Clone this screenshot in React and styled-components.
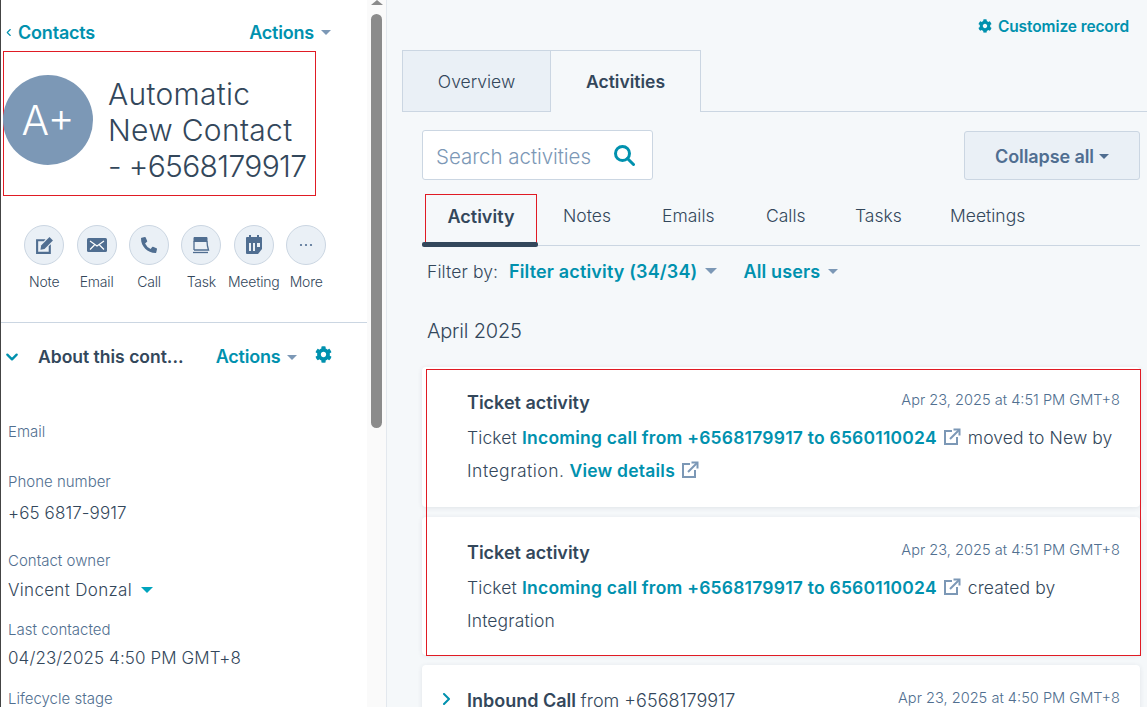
import styled, { createGlobalStyle } from "styled-components";
import { FaCog, FaPhoneAlt } from "react-icons/fa";

const GlobalStyle = createGlobalStyle`
  html, body {
    margin: 0;
    height: 100%;
    overflow: hidden;
    background: #f5f8fa;
  }
  * {
    box-sizing: border-box;
  }
  body {
    font-family: Inter, "Noto Sans", sans-serif;
    color: #33475b;
  }
`;

const Page = styled.div`
  width: 1147px;
  height: 707px;
  display: flex;
  overflow: hidden;
`;

/* left column */
const Sidebar = styled.aside`
  width: 367px;
  height: 707px;
  flex: none;
  background: #fff;
  border-left: 1px solid #444;
  overflow: hidden;
`;
const TopRow = styled.div`
  height: 51px;
  padding: 13px 36px 0 4px;
  display: flex;
  justify-content: space-between;
  align-items: center;
`;
const BackLink = styled.a`
  display: flex;
  align-items: center;
  gap: 4px;
  color: #0091ae;
  font-size: 18px;
  font-weight: 600;
  letter-spacing: -0.2px;
`;
const ActionsLink = styled.a`
  display: flex;
  align-items: center;
  gap: 7px;
  color: #0091ae;
  font-size: 18px;
  font-weight: 600;
  letter-spacing: -0.2px;
`;
const Caret = styled.span`
  width: 0;
  height: 0;
  display: inline-block;
  border-left: ${(p) => p.$size || 5}px solid transparent;
  border-right: ${(p) => p.$size || 5}px solid transparent;
  border-top: ${(p) => p.$size || 5}px solid ${(p) => p.$color || "#7c98b6"};
`;
const Identity = styled.div`
  width: 313px;
  height: 145px;
  margin-left: 2px;
  border: 1px solid #e01b24;
  display: flex;
  align-items: center;
  gap: 15px;
`;
const Avatar = styled.div`
  width: 90px;
  height: 90px;
  flex: none;
  margin-left: -1px;
  margin-top: -8px;
  border-radius: 50%;
  background: #7c98b6;
  color: #fff;
  font-size: 41px;
  font-weight: 300;
  display: flex;
  align-items: center;
  justify-content: center;
`;
const ContactName = styled.h1`
  margin: 12px 0 0;
  font-size: 30px;
  line-height: 36px;
  font-weight: 300;
  letter-spacing: 0.3px;
  white-space: nowrap;
`;
const PhoneLine = styled.span`
  letter-spacing: -0.65px;
`;
const QuickActions = styled.div`
  height: 127px;
  padding: 29px 0 0 17px;
  display: flex;
  border-bottom: 1px solid #cbd6e2;
`;
const QuickAction = styled.div`
  width: 52.4px;
  display: flex;
  flex-direction: column;
  align-items: center;
  gap: 8px;
  font-size: 14px;
  font-weight: 300;
  letter-spacing: -0.2px;
  line-height: 17px;
  white-space: nowrap;
`;
const RoundIcon = styled.div`
  width: 40px;
  height: 40px;
  border-radius: 50%;
  background: #eaf0f6;
  border: 1px solid #cbd6e2;
  color: #506e91;
  display: flex;
  align-items: center;
  justify-content: center;
`;
const AboutRow = styled.div`
  height: 99px;
  padding: 0 0 55px 4px;
  display: flex;
  align-items: flex-end;
`;
const AboutToggle = styled.span`
  color: #0091ae;
  display: flex;
  padding-bottom: 3px;
`;
const AboutTitle = styled.h2`
  margin: 0 32px 0 19px;
  font-size: 17.5px;
  line-height: 20px;
  font-weight: 600;
  white-space: nowrap;
`;
const AboutActions = styled(ActionsLink)`
  line-height: 20px;
  margin-right: 18px;
`;
const GearButton = styled.span`
  color: #0091ae;
  display: flex;
  padding-bottom: 4px;
`;
const Field = styled.div`
  padding-left: 7px;
  height: ${(p) => p.$height}px;
  white-space: nowrap;
`;
const FieldLabel = styled.div`
  color: #516f90;
  font-size: 15px;
  line-height: 20px;
  font-weight: 300;
`;
const FieldValue = styled.div`
  display: flex;
  align-items: center;
  gap: 9px;
  font-size: 17px;
  line-height: 22px;
  font-weight: 300;
  letter-spacing: ${(p) => p.$tracking || 0.1}px;
  margin-top: ${(p) => p.$gap || 0}px;
`;

/* scrollbar */
const ScrollTrack = styled.div`
  width: 20px;
  height: 707px;
  flex: none;
  background: #fafafa;
  border-right: 1px solid #e3e8ee;
  padding: 0 4px;
`;
const ScrollArrow = styled.div`
  width: 0;
  height: 0;
  margin: 0 auto;
  border-left: 6px solid transparent;
  border-right: 6px solid transparent;
  border-bottom: 5px solid #8b8b8b;
`;
const ScrollThumb = styled.div`
  width: 11px;
  height: 414px;
  margin-top: 9px;
  border-radius: 6px;
  background: #8b8b8b;
`;

/* right column */
const Main = styled.main`
  flex: 1;
  min-width: 0;
  height: 707px;
  overflow: hidden;
  background: #f5f8fa;
`;
const CustomizeRow = styled.div`
  height: 50px;
  padding: 17px 18px 0 0;
  display: flex;
  justify-content: flex-end;
`;
const CustomizeLink = styled.a`
  display: flex;
  align-items: center;
  gap: 6px;
  height: 18px;
  color: #0091ae;
  font-size: 15.5px;
  font-weight: 600;
  letter-spacing: -0.1px;
`;
const RecordTabs = styled.div`
  height: 62px;
  margin-left: 15px;
  display: flex;
  border-bottom: 1px solid #cbd6e2;
`;
const RecordTab = styled.div`
  width: ${(p) => p.$width}px;
  height: 62px;
  flex: none;
  display: flex;
  align-items: center;
  justify-content: center;
  font-size: 17.5px;
  font-weight: ${(p) => (p.$active ? 600 : 300)};
  background: ${(p) => (p.$active ? "#f5f8fa" : "#eaf0f6")};
  border: 1px solid #cbd6e2;
  border-left-width: ${(p) => (p.$active ? 0 : 1)}px;
  border-bottom-width: ${(p) => (p.$active ? 0 : 1)}px;
`;
const Content = styled.div`
  padding: 18px 7px 0 35px;
`;
const SearchRow = styled.div`
  display: flex;
  justify-content: space-between;
  height: 50px;
`;
const SearchBox = styled.div`
  width: 231px;
  height: 50px;
  background: #fff;
  border: 1px solid #cbd6e2;
  border-radius: 3px;
  padding: 2px 16px 0 13px;
  display: flex;
  align-items: center;
  justify-content: space-between;
  color: #7c98b6;
  font-size: 20.5px;
  font-weight: 300;
  letter-spacing: -0.05px;
  white-space: nowrap;
`;
const SearchGlyph = styled.span`
  display: flex;
  margin: -2px 1px 0 0;
`;
const CollapseButton = styled.div`
  width: 176px;
  height: 49px;
  margin-top: 1px;
  padding-top: 1px;
  background: #eaf0f6;
  border: 1px solid #cbd6e2;
  border-radius: 3px;
  display: flex;
  align-items: center;
  justify-content: center;
  gap: 5px;
  color: #506e91;
  font-size: 18px;
  font-weight: 600;
  letter-spacing: -0.1px;
`;
const ActivityTabs = styled.div`
  height: 52px;
  margin-top: 14px;
  display: flex;
  align-items: flex-start;
  border-bottom: 1px solid #cbd6e2;
  font-size: 17.5px;
  font-weight: 300;
`;
const ActiveTabWrap = styled.div`
  position: relative;
  width: 116px;
  height: 53px;
  flex: none;
`;
const ActiveTab = styled.div`
  width: 112px;
  height: 49px;
  margin-left: 3px;
  padding-bottom: 5px;
  border: 1px solid #e01b24;
  display: flex;
  align-items: center;
  justify-content: center;
  font-size: 18px;
  font-weight: 600;
`;
const ActiveBar = styled.div`
  position: absolute;
  left: 0;
  bottom: 0;
  width: 116px;
  height: 5px;
  border-radius: 2px;
  background: #33475b;
`;
const ActivityTab = styled.div`
  width: ${(p) => p.$width}px;
  height: 42px;
  flex: none;
  display: flex;
  align-items: center;
  padding-left: ${(p) => p.$left || 0}px;
`;
const FilterRow = styled.div`
  height: 52px;
  padding: 0 0 2px 5px;
  display: flex;
  align-items: center;
  font-size: 17.5px;
  font-weight: 300;
`;
const FilterLabel = styled.span`
  width: 82px;
  letter-spacing: 0.1px;
`;
const FilterLink = styled.a`
  display: flex;
  align-items: center;
  gap: 8px;
  margin-right: 26px;
  color: #0091ae;
  font-size: 18px;
  font-weight: 600;
  letter-spacing: 0.15px;
`;
const MonthTitle = styled.h3`
  margin: 0;
  height: 69px;
  padding: 19px 0 0 5px;
  font-size: 20px;
  line-height: 28px;
  font-weight: 300;
  letter-spacing: -0.2px;
`;
const CardGroup = styled.div`
  position: relative;
  display: flex;
  flex-direction: column;
  gap: 10px;
`;
const RedFrame = styled.div`
  position: absolute;
  left: 4px;
  top: 2px;
  width: 715px;
  height: 287px;
  border: 1px solid #e01b24;
  pointer-events: none;
`;
const Card = styled.article`
  height: ${(p) => p.$height}px;
  background: #fff;
  border-radius: 4px;
  box-shadow: 0 1px 5px rgba(45, 62, 80, 0.1);
  padding: 25px 20px 0 45px;
`;
const CardHead = styled.div`
  display: flex;
  justify-content: space-between;
  align-items: flex-start;
`;
const CardTitle = styled.div`
  position: relative;
  font-size: 18px;
  line-height: 22px;
  font-weight: 600;
  white-space: nowrap;
`;
const CardDate = styled.div`
  color: #516f90;
  font-size: 14.6px;
  line-height: 17px;
  font-weight: 300;
  white-space: nowrap;
`;
const CardBody = styled.div`
  margin-top: 7px;
  font-size: 17.5px;
  line-height: 33px;
  font-weight: 300;
  letter-spacing: 0.12px;
`;
const TealLink = styled.a`
  color: #0091ae;
  font-weight: 600;
  letter-spacing: 0.22px;
`;
const Regular = styled.span`
  font-weight: 300;
`;
const WideWord = styled.span`
  letter-spacing: 0.5px;
`;
const Expander = styled.span`
  position: absolute;
  left: -27px;
  top: 3px;
  color: #0091ae;
  display: flex;
`;
const ExternalWrap = styled.span`
  display: inline-flex;
  vertical-align: -2px;
  margin: 0 7px 0 6px;
`;

const Chevron = ({ dir = "left", size = 10, weight = 2 }) => {
  const d = { left: "M7 2 3 6l4 4", down: "M2 4l4 4 4-4", right: "M4 1l5 5-5 5" }[dir];
  return (
    <svg width={size} height={size} viewBox="0 0 12 12" fill="none" stroke="currentColor" strokeWidth={weight} strokeLinecap="round" strokeLinejoin="round">
      <path d={d} />
    </svg>
  );
};

const External = () => (
  <svg width="18" height="18" viewBox="0 0 18 18" fill="none" stroke="#7c98b6" strokeWidth="2">
    <path d="M9 3H2v13h12V9" />
    <path d="M7 11 16 2" />
    <path d="M10.5 1.5h6v6" />
  </svg>
);

const NoteIcon = () => (
  <svg width="19" height="19" viewBox="0 0 18 18" fill="currentColor">
    <path d="M1 3h9L8.300 5H3v10h10V9.700l2-2V17H1z" />
    <path d="M13.700 1 17 4.300 9 12.400l-3.800.6.600-3.900z" />
  </svg>
);

const EmailIcon = () => (
  <svg width="20" height="14" viewBox="0 0 20 14">
    <rect width="20" height="14" rx="1.500" fill="currentColor" />
    <path d="M3 3l7 5 7-5M3 11.500 7.500 7M17 11.500 12.500 7" fill="none" stroke="#fff" strokeWidth="1.200" />
  </svg>
);

const TaskIcon = () => (
  <svg width="18" height="18" viewBox="0 0 18 18" fill="none" stroke="currentColor">
    <path d="M2 1.500h13v4H2z" fill="currentColor" />
    <path d="M2 5v9M15 5c0 3 .5 6 1.500 9H2" strokeWidth="1.300" />
    <path d="M1 16.500h15" strokeWidth="1.300" />
  </svg>
);

const MeetingIcon = () => (
  <svg width="18" height="20" viewBox="0 0 18 20" fill="currentColor">
    <path d="M4 0h2v3H4zM12 0h2v3h-2z" />
    <path d="M2 2h14a1 1 0 0 1 1 1v11l-4 5H2a1 1 0 0 1-1-1V3a1 1 0 0 1 1-1z" />
    <path d="M4 8h2v8H4zM8 8h2v8H8zM12 8h3v4h-3z" fill="#eaf0f6" />
  </svg>
);

const DotsIcon = () => (
  <svg width="14" height="4" viewBox="0 0 14 4" fill="currentColor">
    <circle cx="2" cy="2" r="1.100" />
    <circle cx="7" cy="2" r="1.100" />
    <circle cx="12" cy="2" r="1.100" />
  </svg>
);

const SearchIcon = () => (
  <svg width="22" height="22" viewBox="0 0 22 22" fill="none" stroke="#0091ae" strokeWidth="3">
    <circle cx="9.500" cy="9.500" r="7" />
    <path d="m14.500 14.500 6 6" strokeLinecap="round" />
  </svg>
);

const quickActions = [
  { label: "Note", icon: <NoteIcon /> },
  { label: "Email", icon: <EmailIcon /> },
  { label: "Call", icon: <FaPhoneAlt size={16} /> },
  { label: "Task", icon: <TaskIcon /> },
  { label: "Meeting", icon: <MeetingIcon /> },
  { label: "More", icon: <DotsIcon /> },
];

const TicketLink = () => (
  <>
    <TealLink>Incoming call from +6568179917 to 6560110024</TealLink>
    <ExternalWrap>
      <External />
    </ExternalWrap>
  </>
);

export default function App() {
  return (
    <Page>
      <GlobalStyle />
      <Sidebar>
        <TopRow>
          <BackLink>
            <Chevron dir="left" size={9} weight={1.5} />
            Contacts
          </BackLink>
          <ActionsLink>
            Actions
            <Caret />
          </ActionsLink>
        </TopRow>
        <Identity>
          <Avatar>A+</Avatar>
          <ContactName>
            Automatic
            <br />
            New Contact
            <br />
            <PhoneLine>- +6568179917</PhoneLine>
          </ContactName>
        </Identity>
        <QuickActions>
          {quickActions.map((a) => (
            <QuickAction key={a.label}>
              <RoundIcon>{a.icon}</RoundIcon>
              {a.label}
            </QuickAction>
          ))}
        </QuickActions>
        <AboutRow>
          <AboutToggle>
            <Chevron dir="down" size={14} />
          </AboutToggle>
          <AboutTitle>About this cont...</AboutTitle>
          <AboutActions>
            Actions
            <Caret />
          </AboutActions>
          <GearButton>
            <FaCog size={17} />
          </GearButton>
        </AboutRow>
        <Field $height={50}>
          <FieldLabel>Email</FieldLabel>
        </Field>
        <Field $height={79}>
          <FieldLabel>Phone number</FieldLabel>
          <FieldValue $gap={10}>+65 6817-9917</FieldValue>
        </Field>
        <Field $height={69}>
          <FieldLabel>Contact owner</FieldLabel>
          <FieldValue $gap={8} $tracking={0.32}>
            Vincent Donzal
            <Caret $size={6} $color="#00a4bd" />
          </FieldValue>
        </Field>
        <Field $height={69}>
          <FieldLabel>Last contacted</FieldLabel>
          <FieldValue $gap={7}>04/23/2025 4:50 PM GMT+8</FieldValue>
        </Field>
        <Field $height={30}>
          <FieldLabel>Lifecycle stage</FieldLabel>
        </Field>
      </Sidebar>
      <ScrollTrack>
        <ScrollArrow />
        <ScrollThumb />
      </ScrollTrack>
      <Main>
        <CustomizeRow>
          <CustomizeLink>
            <FaCog size={14} />
            Customize record
          </CustomizeLink>
        </CustomizeRow>
        <RecordTabs>
          <RecordTab $width={149}>Overview</RecordTab>
          <RecordTab $width={150} $active>
            Activities
          </RecordTab>
        </RecordTabs>
        <Content>
          <SearchRow>
            <SearchBox>
              Search activities
              <SearchGlyph>
                <SearchIcon />
              </SearchGlyph>
            </SearchBox>
            <CollapseButton>
              Collapse all
              <Caret $size={5} $color="#506e91" />
            </CollapseButton>
          </SearchRow>
          <ActivityTabs>
            <ActiveTabWrap>
              <ActiveTab>Activity</ActiveTab>
              <ActiveBar />
            </ActiveTabWrap>
            <ActivityTab $width={124} $left={25}>Notes</ActivityTab>
            <ActivityTab $width={104}>Emails</ActivityTab>
            <ActivityTab $width={89}>Calls</ActivityTab>
            <ActivityTab $width={95}>Tasks</ActivityTab>
            <ActivityTab $width={100}>Meetings</ActivityTab>
          </ActivityTabs>
          <FilterRow>
            <FilterLabel>Filter by:</FilterLabel>
            <FilterLink>
              Filter activity (34/34)
              <Caret $size={6} />
            </FilterLink>
            <FilterLink>
              All users
              <Caret />
            </FilterLink>
          </FilterRow>
          <MonthTitle>April 2025</MonthTitle>
          <CardGroup>
            <Card $height={140}>
              <CardHead>
                <CardTitle>Ticket activity</CardTitle>
                <CardDate>Apr 23, 2025 at 4:51 PM GMT+8</CardDate>
              </CardHead>
              <CardBody>
                Ticket <TicketLink />
                moved to New by <WideWord>Integration.</WideWord> <TealLink>View details</TealLink>
                <ExternalWrap>
                  <External />
                </ExternalWrap>
              </CardBody>
            </Card>
            <Card $height={138}>
              <CardHead>
                <CardTitle>Ticket activity</CardTitle>
                <CardDate>Apr 23, 2025 at 4:51 PM GMT+8</CardDate>
              </CardHead>
              <CardBody>
                Ticket <TicketLink />
                created by Integration
              </CardBody>
            </Card>
            <Card $height={60}>
              <CardHead>
                <CardTitle>
                  <Expander>
                    <Chevron dir="right" size={12} />
                  </Expander>
                  Inbound Call <Regular>from +6568179917</Regular>
                </CardTitle>
                <CardDate>Apr 23, 2025 at 4:50 PM GMT+8</CardDate>
              </CardHead>
            </Card>
            <RedFrame />
          </CardGroup>
        </Content>
      </Main>
    </Page>
  );
}
